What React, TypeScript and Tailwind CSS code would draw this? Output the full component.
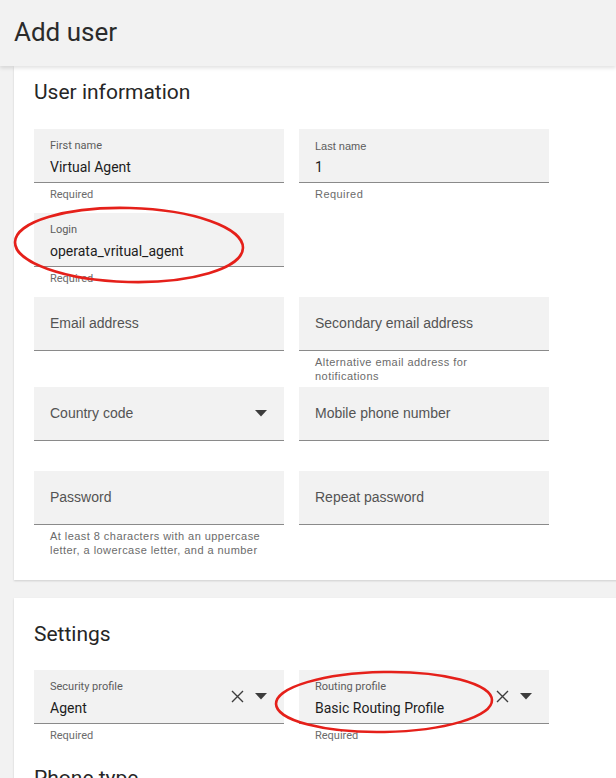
import type { ReactNode } from 'react';

type FieldProps = {
  label: string;
  value?: string;
  helper?: ReactNode;
  select?: boolean;
  clearable?: boolean;
  ember?: boolean;
};

function Caret() {
  return (
    <svg width="12" height="7" viewBox="0 0 12 7" className="shrink-0">
      <path d="M0 0h12L6 6.5z" fill="#3d3d3d" />
    </svg>
  );
}

function Clear() {
  return (
    <svg width="13" height="13" viewBox="0 0 13 13" className="shrink-0">
      <path d="M1 1l11 11M12 1L1 12" stroke="#3d3d3d" strokeWidth="1.4" fill="none" />
    </svg>
  );
}

function Field({ label, value, helper, select, clearable, ember }: FieldProps) {
  const labelFont = ember ? 'font-["Roboto",sans-serif]' : 'font-["Liberation_Sans",Arial,sans-serif]';
  return (
    <div className="flex flex-col">
      <div className="flex h-[54px] items-center border-b border-[#8a8a8a] bg-[#f2f2f2] pl-4 pr-[17px]">
        {value !== undefined ? (
          <div className="flex min-w-0 flex-1 flex-col self-start pt-[10px]">
            <span className={`${labelFont} text-[11px] leading-[14px] text-[#5c5c5c]`}>{label}</span>
            <span className='mt-[4px] font-["Roboto",sans-serif] text-[14px] leading-[20px] text-[#1d1d1d]'>
              {value}
            </span>
          </div>
        ) : (
          <span className={`${labelFont} flex-1 text-[14px] text-[#545454]`}>{label}</span>
        )}
        {clearable && (
          <span className="mr-[11px]">
            <Clear />
          </span>
        )}
        {select && <Caret />}
      </div>
      <div className='min-h-[30px] pt-[4px] pb-[4px] pl-4 pr-[20px] font-["Liberation_Sans",Arial,sans-serif] text-[11px] leading-[14px] tracking-[0.45px] text-[#6b6b6b]'>
        {helper}
      </div>
    </div>
  );
}

function Required() {
  return <span className='font-["Roboto",sans-serif] text-[11px] tracking-normal text-[#6b6b6b]'>Required</span>;
}

export default function App() {
  return (
    <div className="relative h-[778px] w-[616px] overflow-hidden bg-[#f2f2f2]">
      <header className='relative z-10 flex h-[66px] items-center bg-[#f2f2f2] px-[14px] pb-[2px] shadow-[0_2px_4px_rgba(0,0,0,0.12)]'>
        <h1 className='font-["Roboto",sans-serif] text-[26px] text-[#2b2b2b]'>Add user</h1>
      </header>

      <section className="ml-[14px] w-[700px] bg-white px-5 pt-[12px] pb-[19px] shadow-[0_1px_2px_rgba(0,0,0,0.15)]">
        <h2 className='font-["Roboto",sans-serif] text-[21px] leading-[28px] text-[#262626]'>User information</h2>
        <div className="mt-[23px] grid w-[515px] grid-cols-[250px_250px] items-start gap-x-[15px]">
          <Field label="First name" value="Virtual Agent" ember helper={<Required />} />
          <Field label="Last name" value="1" helper="Required" />
          <Field label="Login" value="operata_vritual_agent" ember helper={<Required />} />
          <div />
          <Field label="Email address" />
          <Field label="Secondary email address" helper="Alternative email address for notifications" />
          <Field label="Country code" select />
          <Field label="Mobile phone number" />
          <Field label="Password" helper="At least 8 characters with an uppercase letter, a lowercase letter, and a number" />
          <Field label="Repeat password" />
        </div>
      </section>

      <section className="mt-[18px] ml-[14px] w-[700px] bg-white px-5 pt-[22px] pb-5 shadow-[0_1px_2px_rgba(0,0,0,0.15)]">
        <h2 className='font-["Roboto",sans-serif] text-[21px] leading-[28px] text-[#262626]'>Settings</h2>
        <div className="mt-[22px] grid w-[515px] grid-cols-[250px_250px] items-start gap-x-[15px]">
          <Field label="Security profile" value="Agent" ember select clearable helper={<Required />} />
          <Field label="Routing profile" value="Basic Routing Profile" ember select clearable helper={<Required />} />
        </div>
        <h2 className='mt-[10px] font-["Roboto",sans-serif] text-[21px] leading-[28px] text-[#262626]'>Phone type</h2>
      </section>

      <svg className="pointer-events-none absolute inset-0 z-20" width="616" height="778" viewBox="0 0 616 778">
        <ellipse cx="129" cy="245" rx="114" ry="37" fill="none" stroke="#e5201a" strokeWidth="2.6" transform="rotate(1.5 129 245)" />
        <ellipse cx="384" cy="702" rx="108" ry="30" fill="none" stroke="#e5201a" strokeWidth="2.6" transform="rotate(-1 384 702)" />
      </svg>
    </div>
  );
}
